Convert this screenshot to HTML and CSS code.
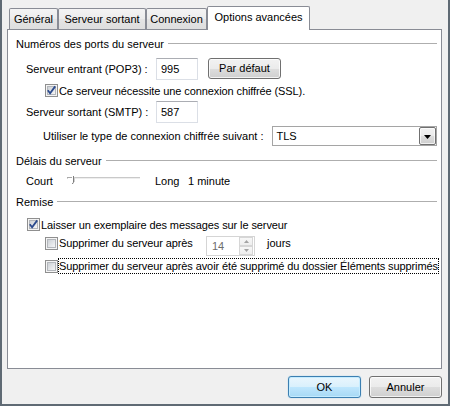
FILE: index.html
```html
<!DOCTYPE html>
<html lang="fr">
<head>
<meta charset="utf-8">
<title>Options avancées</title>
<link rel="stylesheet" href="styles.css">
</head>
<body>
<div class="window">
  <div class="tabs">
    <div class="tab w-gen">Général</div>
    <div class="tab w-out">Serveur sortant</div>
    <div class="tab w-con">Connexion</div>
    <div class="tab active w-adv">Options avancées</div>
  </div>
  <div class="panel">
    <div class="group-head g1"><span>Numéros des ports du serveur</span></div>
    <div class="row port-row r-pop">
      <span class="port-lbl">Serveur entrant (POP3) :</span>
      <span class="textbox">995</span>
      <span class="btn btn-default">Par défaut</span>
    </div>
    <div class="row check-row ind2 r-ssl">
      <span class="cb"><svg width="13" height="13" viewBox="0 0 13 13"><path d="M2.8 6.3 5.1 9.2 10.2 2.4" fill="none" stroke="#2b4a8d" stroke-width="1.8"/></svg></span>
      <span class="cb-lbl">Ce serveur nécessite une connexion chiffrée (SSL).</span>
    </div>
    <div class="row port-row r-smtp">
      <span class="port-lbl">Serveur sortant (SMTP) :</span>
      <span class="textbox">587</span>
    </div>
    <div class="row r-enc">
      <span class="enc-lbl">Utiliser le type de connexion chiffrée suivant :</span>
      <span class="select"><span class="sel-val">TLS</span><span class="drop"><svg width="7" height="4" viewBox="0 0 7 4"><path d="M0 0H7L3.5 4Z" fill="#000"/></svg></span></span>
    </div>
    <div class="group-head g2"><span>Délais du serveur</span></div>
    <div class="row r-slider">
      <span class="court">Court</span>
      <svg class="slider" width="74" height="14" viewBox="0 0 74 14">
        <path d="M6 3.5H73" stroke="#c9c9c9" stroke-width="1"/>
        <path d="M6 4.5H73" stroke="#eeeeee" stroke-width="1"/>
        <path d="M0 3.5H5" stroke="#a8a8a8" stroke-width="1"/>
        <path d="M0 3.5V5" stroke="#a8a8a8" stroke-width="1"/>
        <path d="M6.5 2V8.5Q6.5 9.5 5 9.5" fill="none" stroke="#7d7d7d" stroke-width="1"/>
        <path d="M7.5 3V8" stroke="#d0d0d0" stroke-width="1"/>
      </svg>
      <span class="long">Long</span>
      <span>1 minute</span>
    </div>
    <div class="group-head g3"><span>Remise</span></div>
    <div class="row check-row ind1 r-keep">
      <span class="cb"><svg width="13" height="13" viewBox="0 0 13 13"><path d="M2.8 6.3 5.1 9.2 10.2 2.4" fill="none" stroke="#2b4a8d" stroke-width="1.8"/></svg></span>
      <span class="cb-lbl">Laisser un exemplaire des messages sur le serveur</span>
    </div>
    <div class="row check-row ind2 r-days">
      <span class="cb"></span>
      <span class="cb-lbl days-lbl">Supprimer du serveur après</span>
      <span class="spinner"><span class="spin-val">14</span><span class="spin-btns"><span class="spin up"><svg width="5" height="3" viewBox="0 0 5 3"><path d="M0 3H5L2.5 0Z" fill="#a3a3a3"/></svg></span><span class="spin down"><svg width="5" height="3" viewBox="0 0 5 3"><path d="M0 0H5L2.5 3Z" fill="#a3a3a3"/></svg></span></span></span>
      <span class="jours">jours</span>
    </div>
    <div class="row check-row ind2 r-del">
      <span class="cb"></span>
      <span class="cb-lbl focus">Supprimer du serveur après avoir été supprimé du dossier Éléments supprimés</span>
    </div>
  </div>
  <div class="actions">
    <span class="btn btn-ok">OK</span>
    <span class="btn">Annuler</span>
  </div>
</div>
</body>
</html>
```
FILE: styles.css
```css
html, body {
  margin: 0;
  padding: 0;
  background: #f0f0f0;
}
body {
  font-family: "Liberation Sans", Arial, sans-serif;
  font-size: 11px;
  line-height: 14px;
  color: #000;
}
.window {
  box-sizing: border-box;
  width: 450px;
  height: 406px;
  border-style: solid;
  border-color: #5f6a74;
  border-width: 0 2px 2px 2px;
  background: #f0f0f0;
  padding: 6px 6px 0 5px;
  display: flex;
  flex-direction: column;
}
.tabs {
  display: flex;
  align-items: flex-end;
  height: 23px;
  padding-left: 2px;
}
.tab {
  box-sizing: border-box;
  height: 21px;
  border: 1px solid #898c95;
  border-bottom: none;
  border-radius: 2px 2px 0 0;
  background: linear-gradient(#f4f4f4, #ececec 50%, #e4e4e4 51%, #dedede);
  padding-top: 3px;
  text-align: center;
  white-space: nowrap;
}
.w-gen { width: 49px; }
.w-out { width: 88px; }
.w-con { width: 61px; }
.w-adv { width: 103px; }
.tab.active {
  height: 24px;
  margin-bottom: -1px;
  background: #fff;
  position: relative;
  z-index: 1;
  padding-top: 3px;
}
.panel {
  box-sizing: border-box;
  width: 435px;
  height: 340px;
  border: 1px solid #898c95;
  background: #fff;
  padding: 7px 4px 0 8px;
  display: flex;
  flex-direction: column;
}
.group-head {
  display: flex;
  align-items: center;
  height: 14px;
  white-space: nowrap;
}
.group-head::after {
  content: "";
  flex: 1;
  height: 0;
  border-top: 1px solid #aeaeae;
  margin: -1px 0 0 4px;
}
.g2 { margin-top: 8px; }
.g3 { margin-top: 7px; }
.row {
  display: flex;
  align-items: center;
  white-space: nowrap;
}
.port-row {
  height: 22px;
  align-items: flex-start;
  padding-left: 10px;
}
.r-pop { margin-top: 7px; }
.r-smtp { margin-top: 3px; }
.port-lbl {
  width: 130px;
  line-height: 22px;
}
.textbox {
  box-sizing: border-box;
  width: 42px;
  height: 22px;
  border: 1px solid #dbdfe6;
  border-top-color: #abadb3;
  padding-left: 4px;
  line-height: 20px;
  background: #fff;
}
.btn {
  box-sizing: border-box;
  width: 73px;
  height: 22px;
  border: 1px solid #707070;
  border-radius: 3px;
  background: linear-gradient(#f2f2f2, #ebebeb 50%, #dddddd 51%, #cfcfcf);
  box-shadow: inset 0 0 0 1px rgba(255, 255, 255, 0.75);
  text-align: center;
  line-height: 20px;
}
.btn-default {
  height: 21px;
  margin-left: 10px;
  line-height: 19px;
}
.check-row { height: 15px; }
.ind1 { padding-left: 11px; }
.ind2 { padding-left: 29px; }
.r-ssl { margin-top: 3px; }
.cb {
  box-sizing: border-box;
  width: 13px;
  height: 13px;
  flex: none;
  border: 1px solid #8f8f8f;
  background: #f4f4f4;
  padding: 1px;
  position: relative;
}
.cb::before {
  content: "";
  display: block;
  box-sizing: border-box;
  width: 9px;
  height: 9px;
  border: 1px solid #b3b6bb;
  background: linear-gradient(135deg, #cdd1d6, #f6f6f6);
}
.cb svg {
  position: absolute;
  left: -1px;
  top: -1px;
}
.cb-lbl {
  margin-left: 1px;
  letter-spacing: -0.1px;
}
.r-enc {
  margin-top: 3px;
  height: 20px;
  padding-left: 27px;
}
.enc-lbl { width: 230px; }
.select {
  box-sizing: border-box;
  width: 165px;
  height: 20px;
  border: 1px solid #a5a5a5;
  background: #fff;
  display: flex;
  align-items: center;
}
.sel-val {
  padding-left: 3px;
  flex: 1;
}
.drop {
  box-sizing: border-box;
  width: 17px;
  height: 18px;
  border: 1px solid #707070;
  border-radius: 2px;
  background: linear-gradient(#f2f2f2, #ebebeb 50%, #dddddd 51%, #cfcfcf);
  box-shadow: inset 0 0 0 1px rgba(255, 255, 255, 0.7);
  display: flex;
  align-items: center;
  justify-content: center;
}
.drop svg { margin-top: 1px; }
.r-slider {
  margin-top: 6px;
  height: 14px;
  padding-left: 10px;
}
.court { width: 41px; }
.slider { flex: none; }
.long {
  margin-left: 14px;
  width: 33px;
}
.r-keep { margin-top: 8px; }
.r-days {
  margin-top: 4px;
  height: 21px;
  align-items: flex-start;
}
.r-days .cb { margin-top: 1px; }
.days-lbl {
  width: 147px;
}
.spinner {
  box-sizing: border-box;
  width: 49px;
  height: 20px;
  border: 1px solid #d5d5d5;
  background: #fff;
  display: flex;
  color: #6d6d6d;
}
.spin-val {
  flex: 1;
  padding-left: 5px;
  line-height: 18px;
}
.spin-btns {
  display: flex;
  flex-direction: column;
  padding: 0 1px 0 0;
}
.spin {
  box-sizing: border-box;
  width: 14px;
  height: 9px;
  border: 1px solid #d6d6d6;
  background: linear-gradient(#f7f7f7, #eeeeee);
  display: flex;
  align-items: center;
  justify-content: center;
}
.jours { margin-left: 12px; }
.r-del {
  margin-top: 1px;
  height: 16px;
}
.focus {
  outline: 1px dotted #000;
  line-height: 14px;
}
.actions {
  display: flex;
  justify-content: flex-end;
  gap: 8px;
  margin-top: 7px;
}
.btn-ok {
  border-color: #3c7fb1;
  background: linear-gradient(#e9f6fd, #d9f0fc 50%, #bee6fd 51%, #a7d9f5);
  box-shadow: inset 0 0 0 1px #c5ecff, 0 0 1px #5fb6e8;
}
```
